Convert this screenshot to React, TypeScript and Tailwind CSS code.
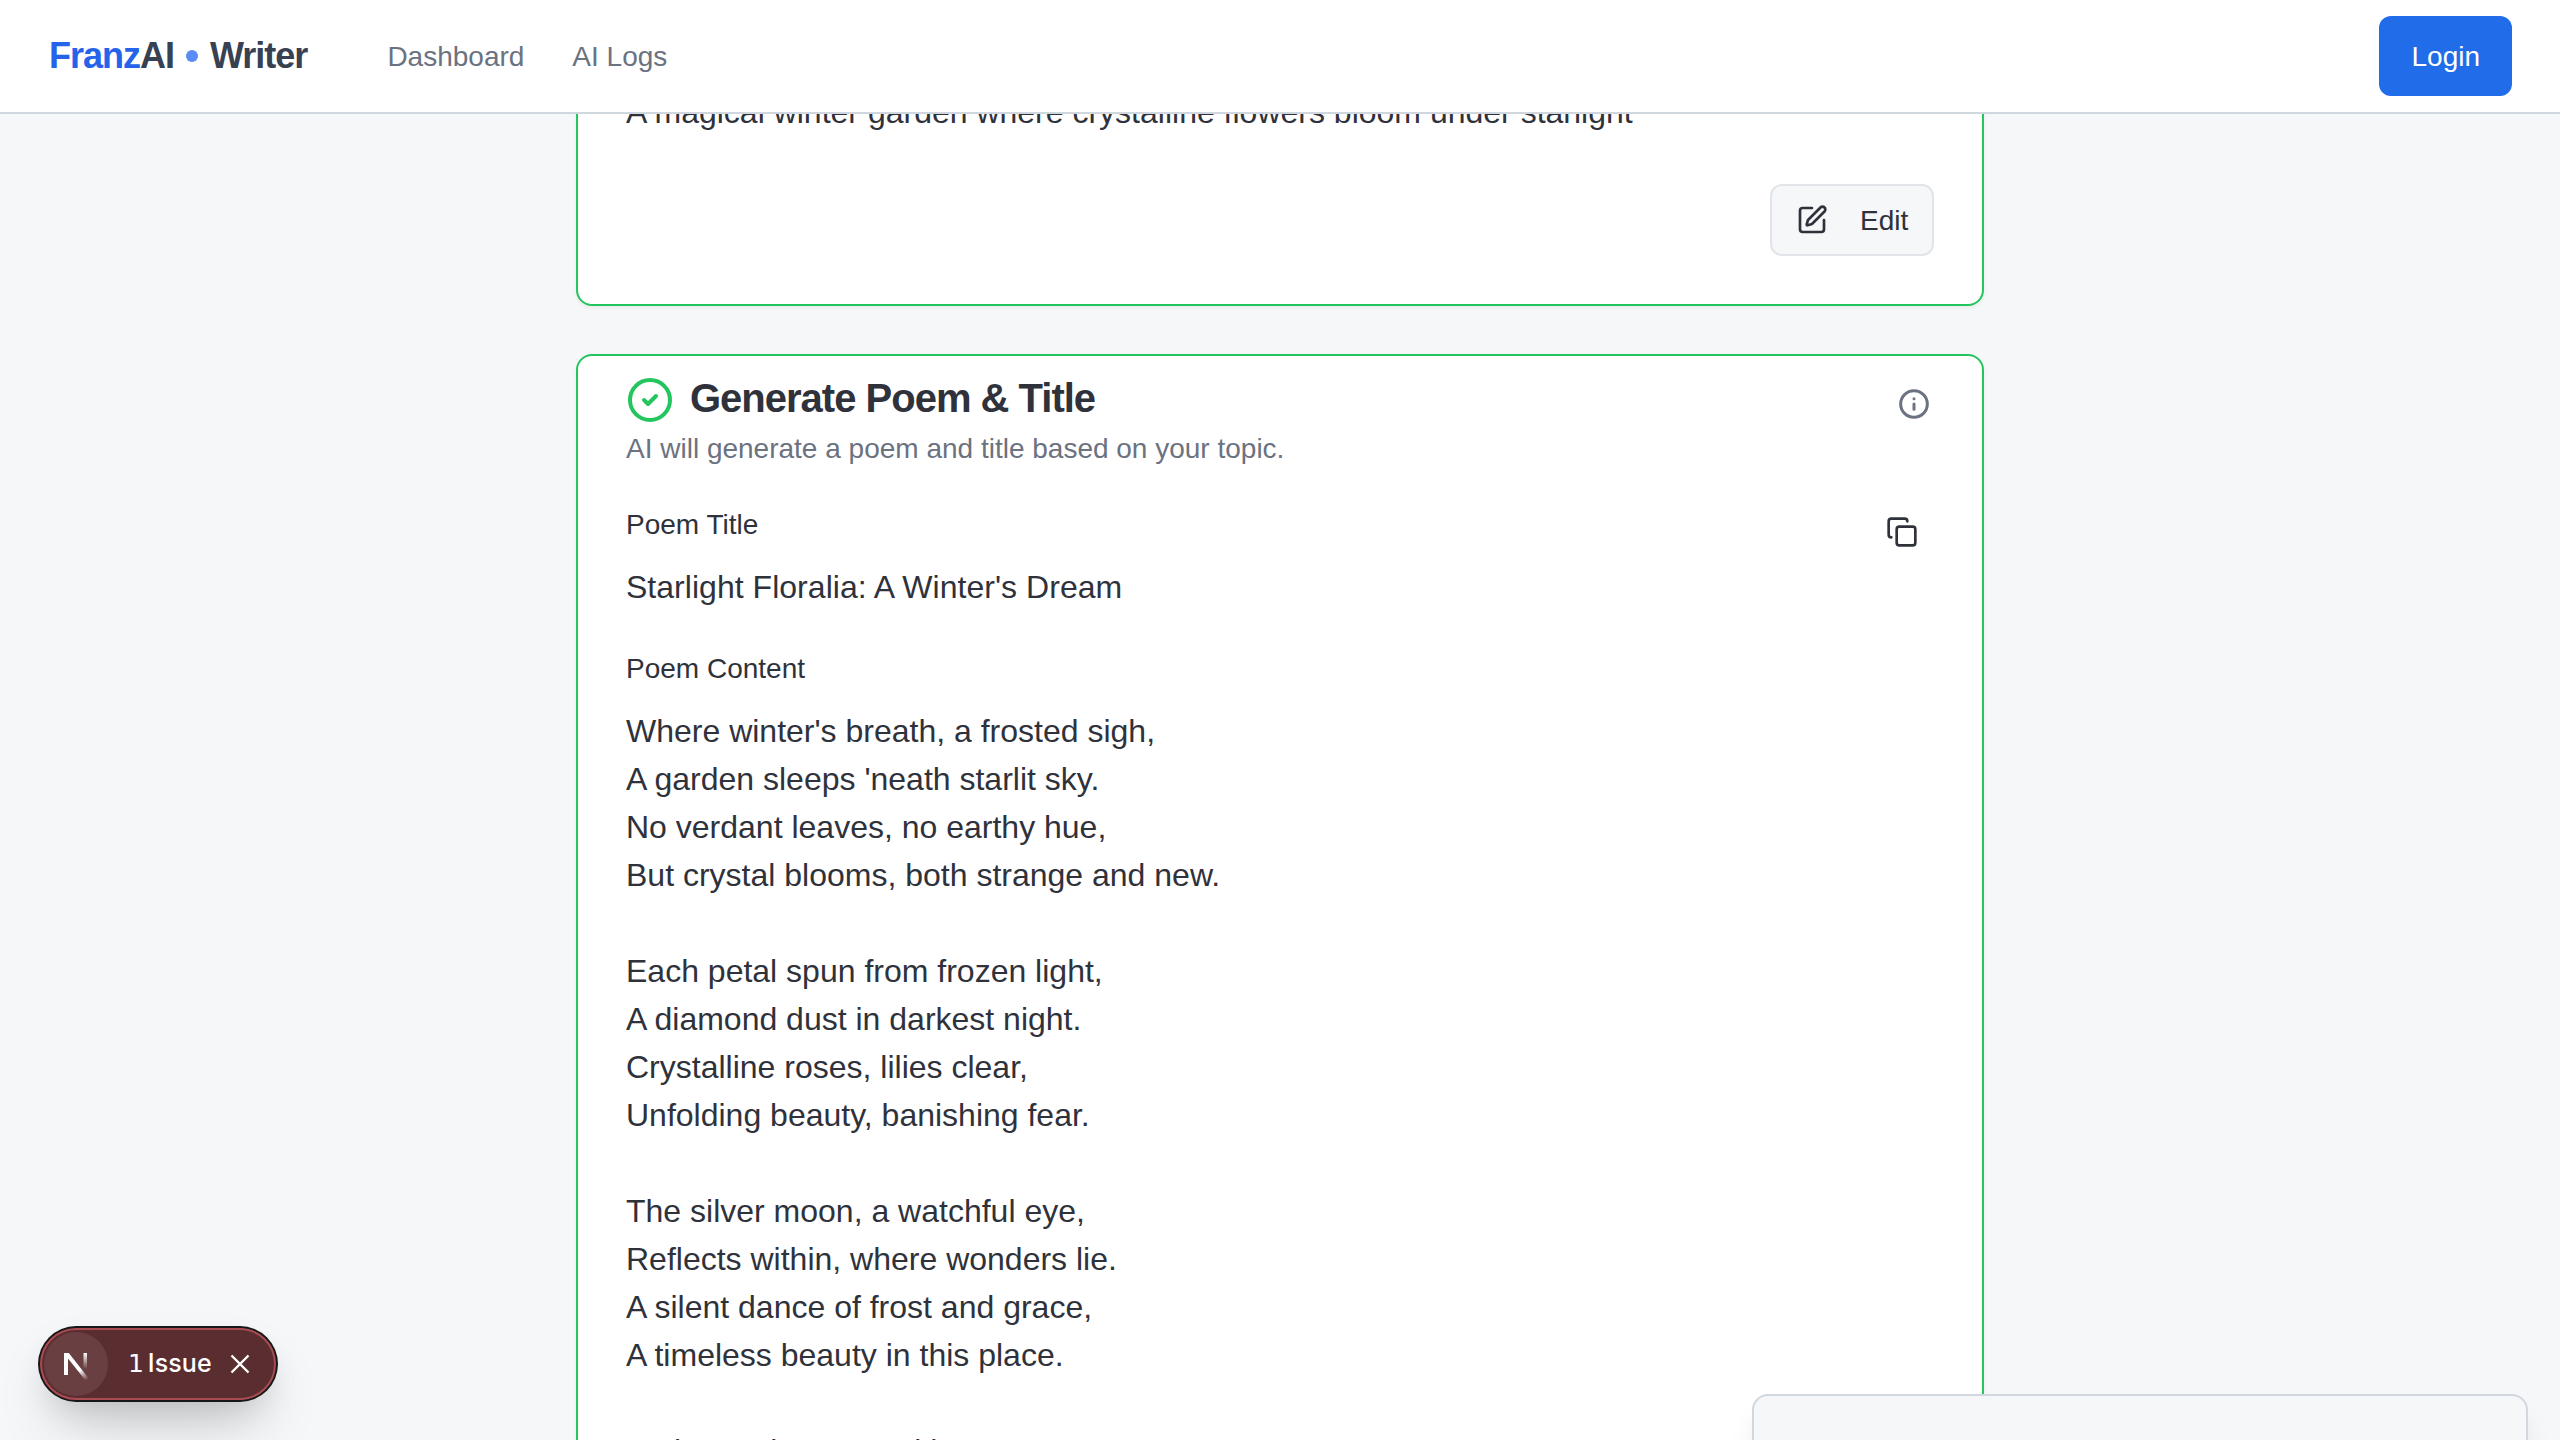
import React from "react";
import { CircleCheck, Copy, Info, SquarePen } from "lucide-react";

const poem = `Where winter's breath, a frosted sigh,
A garden sleeps 'neath starlit sky.
No verdant leaves, no earthy hue,
But crystal blooms, both strange and new.

Each petal spun from frozen light,
A diamond dust in darkest night.
Crystalline roses, lilies clear,
Unfolding beauty, banishing fear.

The silver moon, a watchful eye,
Reflects within, where wonders lie.
A silent dance of frost and grace,
A timeless beauty in this place.

So let us dream, and learn to see,`;

function Header() {
  return (
    <header className="relative z-10 flex h-[114px] shrink-0 items-center border-b-2 border-[#d1d7de] bg-white px-12">
      <div className="ml-px flex items-center text-[36px] font-bold leading-[56px] tracking-[-1px] text-[#374151]">
        <span className="text-[#2563eb]">Franz</span>
        <span>AI</span>
        <span className="mx-3 size-3 rounded-full bg-[#5b8af3]" />
        <span>Writer</span>
      </div>
      <nav className="ml-20 flex gap-12 pt-0.5 text-[28px] leading-10 text-[#6b7280]">
        <a>Dashboard</a>
        <a>AI Logs</a>
      </nav>
      <button className="ml-auto h-20 rounded-xl bg-[#206ce9] px-8 pt-0.5 text-[28px] leading-10 text-white">Login</button>
    </header>
  );
}

function NextLogo() {
  return (
    <svg viewBox="0 0 64 64" className="size-16" fill="none">
      <defs>
        <linearGradient id="diagonal" x1="36" y1="38" x2="43" y2="48" gradientUnits="userSpaceOnUse">
          <stop stopColor="#fff" />
          <stop offset="1" stopColor="#fff" stopOpacity="0" />
        </linearGradient>
        <linearGradient id="stem" x1="41" y1="21" x2="41" y2="37" gradientUnits="userSpaceOnUse">
          <stop stopColor="#fff" />
          <stop offset="1" stopColor="#fff" stopOpacity="0" />
        </linearGradient>
      </defs>
      <path d="M20 43V21h4v22z" fill="#fff" />
      <path d="M20 21h4.800L44.800 46.600L42 49L22 24z" fill="url(#diagonal)" />
      <path d="M39.500 21h3.500v16h-3.500z" fill="url(#stem)" />
    </svg>
  );
}

export default function App() {
  return (
    <div className="relative flex h-[1440px] w-[2560px] flex-col overflow-hidden bg-[#f5f7f9] font-['Liberation_Sans',Arial,sans-serif] text-[#2f323b]">
      <Header />
      <main className="mx-auto flex w-[1408px] flex-col gap-12">
        <section className="-mt-10 flex h-[232px] flex-col rounded-2xl border-2 border-[#22c55e] bg-white px-12 pb-12 shadow-[0_2px_4px_rgba(0,0,0,0.05)]">
          <p className="mt-3 text-[32px] leading-[48px]">
            A magical winter garden where crystalline flowers bloom under starlight
          </p>
          <button className="mt-auto flex h-[72px] w-[164px] items-center self-end rounded-xl border-2 border-[#e1e5e9] bg-[#f5f7f9] pl-6 text-[28px] leading-10">
            <SquarePen className="mr-8 size-8" />
            <span className="pt-0.5">Edit</span>
          </button>
        </section>
        <section className="flex h-[1300px] flex-col rounded-2xl border-2 border-[#22c55e] bg-white px-12 shadow-[0_2px_4px_rgba(0,0,0,0.05)]">
          <div className="flex justify-between pt-4">
            <div>
              <h2 className="flex items-center gap-4 text-[40px] font-bold leading-[56px] tracking-[-1px]">
                <CircleCheck className="size-12 text-[#22c55e]" />
                <span className="pb-[3px] leading-[53px]">Generate Poem &amp; Title</span>
              </h2>
              <p className="mt-px text-[28px] leading-10 text-[#6b7280]">
                AI will generate a poem and title based on your topic.
              </p>
            </div>
            <Info className="mr-1 mt-4 size-8 text-[#6b7280]" strokeWidth={2.25} />
          </div>
          <div className="flex justify-between">
            <div className="pt-9">
              <h3 className="text-[28px] leading-10">Poem Title</h3>
              <p className="mt-[18px] text-[32px] leading-[48px] tracking-[0.03px]">Starlight Floralia: A Winter's Dream</p>
              <h3 className="mt-[38px] text-[28px] leading-10">Poem Content</h3>
              <p className="mt-[18px] whitespace-pre-wrap text-[32px] leading-[48px]">{poem}</p>
            </div>
            <Copy className="mr-4 mt-[47px] size-8" />
          </div>
        </section>
      </main>

      <div className="absolute left-[1752px] top-[1394px] h-40 w-[776px] rounded-2xl border-2 border-[#d1d7de] bg-[#f5f7f9] shadow-[0_20px_30px_-6px_rgba(0,0,0,0.1),0_8px_12px_-8px_rgba(0,0,0,0.1)]" />

      <div className="absolute left-[40px] top-[1328px] flex h-[72px] w-[236px] items-center rounded-full border-2 border-[#a94b52] bg-[#5a2e31] pl-0.5 text-white shadow-[0_0_0_2px_#171717,0_32px_64px_-16px_rgba(0,0,0,0.24),0_16px_32px_-8px_rgba(0,0,0,0.15)]">
        <span className="size-16 rounded-full bg-[#693f42]">
          <NextLogo />
        </span>
        <span className="-mt-px ml-5 w-[87px] whitespace-nowrap font-['Inter',sans-serif] text-[25px] font-medium leading-9 tracking-[0.1px] [word-spacing:-3px]">
          <span className="font-['DejaVu_Sans',sans-serif]">1</span> Issue
        </span>
        <svg viewBox="0 0 18 18" className="ml-4 size-[18px] overflow-visible" fill="none" stroke="white" strokeWidth="2.400">
          <path d="M0.500 0.500L17.500 17.500M17.500 0.500L0.500 17.500" />
        </svg>
      </div>
    </div>
  );
}
